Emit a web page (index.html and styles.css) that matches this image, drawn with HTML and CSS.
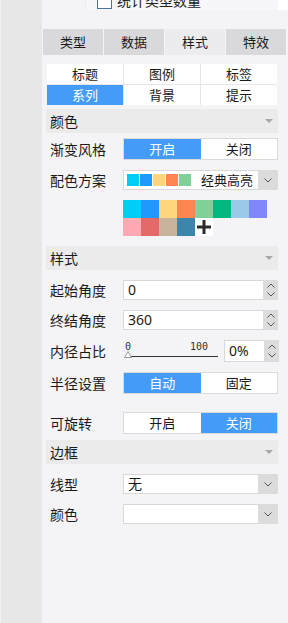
FILE: index.html
```html
<!DOCTYPE html>
<html lang="zh">
<head>
    <meta charset="UTF-8">
    <meta name="viewport" content="width=device-width, initial-scale=1.0">
    <title>样式设置</title>
    <link rel="stylesheet" href="styles.css">
</head>
<body>
<div class="app">
    <div class="side"></div>
    <div class="panel">
        <div class="top">
            <div class="peek">
                <span class="check"></span>
                <span class="peek-text">统计类型数量</span>
            </div>
            <div class="top-edge"></div>
        </div>

        <div class="tabs">
            <div class="tab">类型</div>
            <div class="tab">数据</div>
            <div class="tab on">样式</div>
            <div class="tab">特效</div>
        </div>

        <div class="subtabs">
            <div class="sub">标题</div>
            <div class="sub">图例</div>
            <div class="sub">标签</div>
            <div class="sub on">系列</div>
            <div class="sub">背景</div>
            <div class="sub">提示</div>
        </div>

        <div class="section first"><span>颜色</span><i class="caret"></i></div>

        <div class="row tight">
            <div class="label">渐变风格</div>
            <div class="toggle">
                <div class="opt on">开启</div>
                <div class="opt">关闭</div>
            </div>
        </div>

        <div class="row">
            <div class="label">配色方案</div>
            <div class="select">
                <div class="val scheme">
                    <span class="sw" style="background:#00cdf8"></span>
                    <span class="sw" style="background:#1f99fc"></span>
                    <span class="sw" style="background:#ffd67d"></span>
                    <span class="sw" style="background:#ff8650"></span>
                    <span class="sw" style="background:#80d09a"></span>
                    <span class="scheme-name">经典高亮</span>
                </div>
                <div class="arrow"><svg width="8" height="5" viewBox="0 0 8 5"><polyline points="0.5,0.5 4,4 7.5,0.5" fill="none" stroke="#555" stroke-width="1"/></svg></div>
            </div>
        </div>

        <div class="palette">
            <span style="background:#00cdf8"></span>
            <span style="background:#1f99fc"></span>
            <span style="background:#ffd67d"></span>
            <span style="background:#ff8650"></span>
            <span style="background:#80d09a"></span>
            <span style="background:#00b77f"></span>
            <span style="background:#9bc9e8"></span>
            <span style="background:#7f87fb"></span>
            <span style="background:#ffaab2"></span>
            <span style="background:#e46a6a"></span>
            <span style="background:#c8b49c"></span>
            <span style="background:#3c86ab"></span>
            <span class="add"><svg width="14" height="14" viewBox="0 0 14 14"><rect x="5.5" y="0" width="3" height="14" fill="#2b2b2b"/><rect x="0" y="5.5" width="14" height="3" fill="#2b2b2b"/></svg></span>
        </div>

        <div class="section"><span>样式</span><i class="caret"></i></div>

        <div class="row">
            <div class="label">起始角度</div>
            <div class="num">
                <div class="val">0</div>
                <div class="spin">
                    <svg width="8" height="5" viewBox="0 0 8 5"><polyline points="0.5,4.5 4,1 7.5,4.5" fill="none" stroke="#555" stroke-width="1"/></svg>
                    <svg width="8" height="5" viewBox="0 0 8 5"><polyline points="0.5,0.5 4,4 7.5,0.5" fill="none" stroke="#555" stroke-width="1"/></svg>
                </div>
            </div>
        </div>

        <div class="row">
            <div class="label">终结角度</div>
            <div class="num">
                <div class="val">360</div>
                <div class="spin">
                    <svg width="8" height="5" viewBox="0 0 8 5"><polyline points="0.5,4.5 4,1 7.5,4.5" fill="none" stroke="#555" stroke-width="1"/></svg>
                    <svg width="8" height="5" viewBox="0 0 8 5"><polyline points="0.5,0.5 4,4 7.5,0.5" fill="none" stroke="#555" stroke-width="1"/></svg>
                </div>
            </div>
        </div>

        <div class="row">
            <div class="label">内径占比</div>
            <div class="slider">
                <div class="ticks"><span>0</span><span>100</span></div>
                <div class="track">
                    <svg class="thumb" width="8" height="7" viewBox="0 0 8 7"><polygon points="4,0.5 7.5,6.5 0.5,6.5" fill="#fff" stroke="#999" stroke-width="1"/></svg>
                </div>
            </div>
            <div class="num pct">
                <div class="val">0%</div>
                <div class="spin">
                    <svg width="8" height="5" viewBox="0 0 8 5"><polyline points="0.5,4.5 4,1 7.5,4.5" fill="none" stroke="#555" stroke-width="1"/></svg>
                    <svg width="8" height="5" viewBox="0 0 8 5"><polyline points="0.5,0.5 4,4 7.5,0.5" fill="none" stroke="#555" stroke-width="1"/></svg>
                </div>
            </div>
        </div>

        <div class="row">
            <div class="label">半径设置</div>
            <div class="toggle">
                <div class="opt on">自动</div>
                <div class="opt">固定</div>
            </div>
        </div>

        <div class="row wide">
            <div class="label">可旋转</div>
            <div class="toggle">
                <div class="opt">开启</div>
                <div class="opt on">关闭</div>
            </div>
        </div>

        <div class="section near"><span>边框</span><i class="caret"></i></div>

        <div class="row">
            <div class="label">线型</div>
            <div class="select">
                <div class="val">无</div>
                <div class="arrow"><svg width="8" height="5" viewBox="0 0 8 5"><polyline points="0.5,0.5 4,4 7.5,0.5" fill="none" stroke="#555" stroke-width="1"/></svg></div>
            </div>
        </div>

        <div class="row">
            <div class="label">颜色</div>
            <div class="select">
                <div class="val"></div>
                <div class="arrow"><svg width="8" height="5" viewBox="0 0 8 5"><polyline points="0.5,0.5 4,4 7.5,0.5" fill="none" stroke="#555" stroke-width="1"/></svg></div>
            </div>
        </div>
    </div>
</div>
</body>
</html>
```

FILE: styles.css
```css
* {
    margin: 0;
    padding: 0;
    box-sizing: border-box;
}
body {
    width: 288px;
    height: 623px;
    overflow: hidden;
    font-family: "Noto Sans CJK SC", "Liberation Sans", sans-serif;
    color: #1a1a1a;
}
.app {
    display: flex;
    height: 623px;
}
.side {
    width: 42px;
    background-color: #e7e7e7;
    border-left: 1px solid #f0f0ee;
}
.panel {
    flex: 1;
    background-color: #f4f4f6;
}

/* scrolled-off list above the tabs */
.top {
    display: flex;
    height: 10px;
    padding-left: 43px;
}
.peek {
    width: 193px;
    height: 10px;
    overflow: hidden;
    display: flex;
    align-items: flex-start;
    background-color: #f7f7f9;
    border-left: 1px solid #ececee;
    padding-left: 11px;
}
.check {
    flex: none;
    width: 15px;
    height: 14px;
    margin-top: -5px;
    border: 1.5px solid #4c6fa6;
    background: #fff;
}
.peek-text {
    font-size: 14px;
    line-height: 14px;
    margin-top: -7px;
    margin-left: 5px;
    color: #222;
    white-space: nowrap;
}
.top-edge {
    flex: 1;
    background-color: #fff;
}

.tabs {
    display: grid;
    grid-template-columns: repeat(4, 60px);
    gap: 1px;
    margin: 19px 0 0 1px;
}
.tab {
    height: 26px;
    line-height: 26px;
    text-align: center;
    font-size: 13px;
    background-color: #d9d9dc;
}
.tab.on {
    background-color: #ececee;
}

.subtabs {
    display: grid;
    grid-template-columns: repeat(3, 1fr);
    gap: 1px;
    width: 230px;
    margin: 9px 0 0 5px;
    background-color: #e6e6e8;
}
.sub {
    height: 20px;
    line-height: 20px;
    text-align: center;
    font-size: 13px;
    background-color: #fff;
}
.sub.on {
    background-color: #449cf8;
    color: #fff;
}

.section {
    display: flex;
    justify-content: space-between;
    align-items: center;
    height: 24px;
    margin: 10px 10px 0 4px;
    padding: 0 5px 0 4px;
    background-color: #ebebeb;
    font-size: 14px;
}
.section.first {
    margin-top: 4px;
}
.section.near {
    margin-top: 6px;
}
.caret {
    width: 0;
    height: 0;
    border-left: 4px solid transparent;
    border-right: 4px solid transparent;
    border-top: 4px solid #a8a8a8;
}

.row {
    display: flex;
    align-items: center;
    margin-top: 10px;
    padding-left: 8px;
}
.row.tight {
    margin-top: 5px;
}
.row.wide {
    margin-top: 18px;
}
.label {
    width: 73px;
    font-size: 14px;
    line-height: 20px;
}

.toggle {
    display: flex;
    width: 155px;
    height: 22px;
    border: 1px solid #dadada;
    background-color: #fff;
}
.opt {
    flex: 1;
    text-align: center;
    font-size: 13px;
    line-height: 20px;
}
.opt.on {
    background-color: #449cf8;
    color: #fff;
}

.select, .num {
    display: flex;
    width: 155px;
    height: 20px;
    border: 1px solid #d8d8d8;
    border-right: none;
    background-color: #fff;
}
.val {
    flex: 1;
    padding-left: 4px;
    font-size: 14px;
    line-height: 18px;
    font-family: "Noto Sans", "Noto Sans CJK SC", sans-serif;
}
.arrow {
    width: 20px;
    margin: -1px 0;
    background-color: #dcdcdc;
    display: flex;
    align-items: center;
    justify-content: center;
}
.spin {
    width: 15px;
    margin: -1px 0;
    background-color: #dcdcdc;
    display: flex;
    flex-direction: column;
    align-items: center;
    justify-content: center;
    gap: 4px;
}

.scheme {
    display: flex;
    align-items: center;
    padding-left: 3px;
    gap: 1px;
}
.sw {
    flex: none;
    width: 12px;
    height: 12px;
}
.scheme-name {
    margin-left: 9px;
    font-size: 13px;
    font-family: "Noto Sans CJK SC", sans-serif;
    white-space: nowrap;
}

.palette {
    display: grid;
    grid-template-columns: repeat(8, 18px);
    grid-auto-rows: 18px;
    margin: 10px 0 0 81px;
}
.add {
    background-color: #fff;
    display: flex;
    align-items: center;
    justify-content: center;
}

.slider {
    width: 95px;
    height: 22px;
    display: flex;
    flex-direction: column;
    justify-content: flex-end;
    padding-bottom: 5px;
}
.ticks {
    display: flex;
    justify-content: space-between;
    padding: 0 10px 0 2px;
    font-size: 10px;
    line-height: 10px;
    font-family: "DejaVu Sans Mono", monospace;
    color: #333;
}
.track {
    position: relative;
    height: 1px;
    margin-top: 4px;
    margin-left: 2px;
    background-color: #333;
}
.thumb {
    position: absolute;
    left: -1px;
    top: -5px;
}
.num.pct {
    width: 55px;
    height: 22px;
    margin-left: 6px;
}
.pct .val {
    line-height: 20px;
}
```
